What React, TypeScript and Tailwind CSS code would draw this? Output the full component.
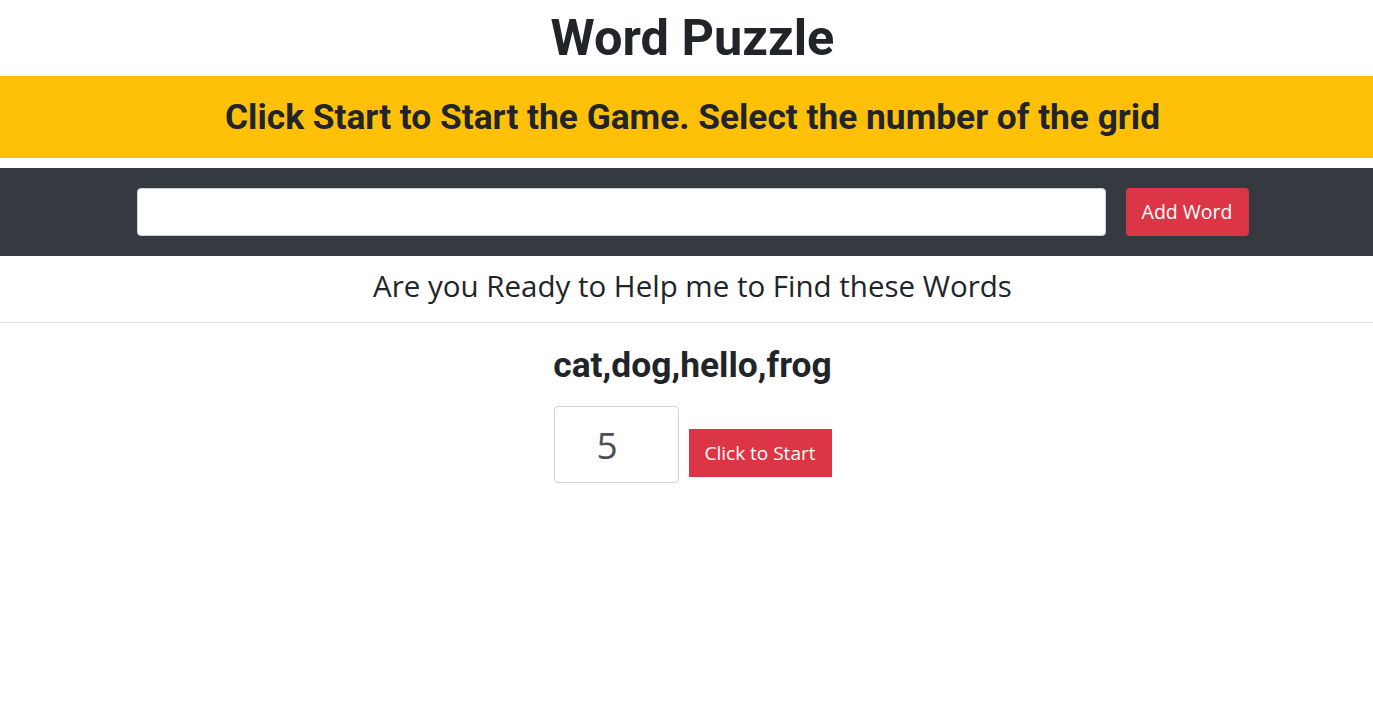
import { useState } from "react";

const HEAD = { fontFamily: "Roboto, 'Liberation Sans', sans-serif" };
const BODY = { fontFamily: "'Open Sans', 'Noto Sans', sans-serif" };

export default function App() {
  const [word, setWord] = useState("");
  const [size, setSize] = useState(5);
  const words = ["cat", "dog", "hello", "frog"];

  return (
    <div className="min-h-screen bg-white text-[#212529]" style={BODY}>
      <h1 className="py-[6px] pl-[12px] text-center text-[50.5px] font-bold leading-[64px]" style={HEAD}>
        Word Puzzle
      </h1>

      <div className="flex h-[82px] items-center justify-center bg-[#ffc107] pt-[2px] pl-[12px]">
        <h2 className="text-[35.3px] font-bold leading-none" style={HEAD}>
          Click Start to Start the Game. Select the number of the grid
        </h2>
      </div>

      <div className="mt-[10px] flex h-[88px] items-center justify-center gap-[20px] bg-[#343a40] pl-[12px]">
        <input
          value={word}
          onChange={(e) => setWord(e.target.value)}
          className="h-[48px] w-[969px] rounded border border-[#ced4da] bg-white px-3 text-lg outline-none"
        />
        <button className="h-[48px] w-[123px] rounded bg-[#dc3545] text-[19.5px] text-white">
          Add Word
        </button>
      </div>

      <p className="pt-[12px] pb-[18px] pl-[12px] text-center text-[29.5px] leading-[36px]">
        Are you Ready to Help me to Find these Words
      </p>
      <hr className="border-t border-[#dee2e6]" />

      <h3 className="pt-[22px] pl-[12px] text-center text-[35.4px] font-bold leading-[40px]" style={HEAD}>
        {words.join(",")}
      </h3>

      <div className="mt-[21px] flex items-start justify-center gap-[10px] pl-[12px]">
        <input
          type="text"
          value={size}
          onChange={(e) => setSize(Number(e.target.value) || 0)}
          className="h-[77px] w-[125px] rounded border border-[#ced4da] pr-[18px] text-center text-[37px] text-[#495057] outline-none"
        />
        <button className="mt-[23px] h-[48px] w-[143px] bg-[#dc3545] text-[19px] text-white">
          Click to Start
        </button>
      </div>
    </div>
  );
}
